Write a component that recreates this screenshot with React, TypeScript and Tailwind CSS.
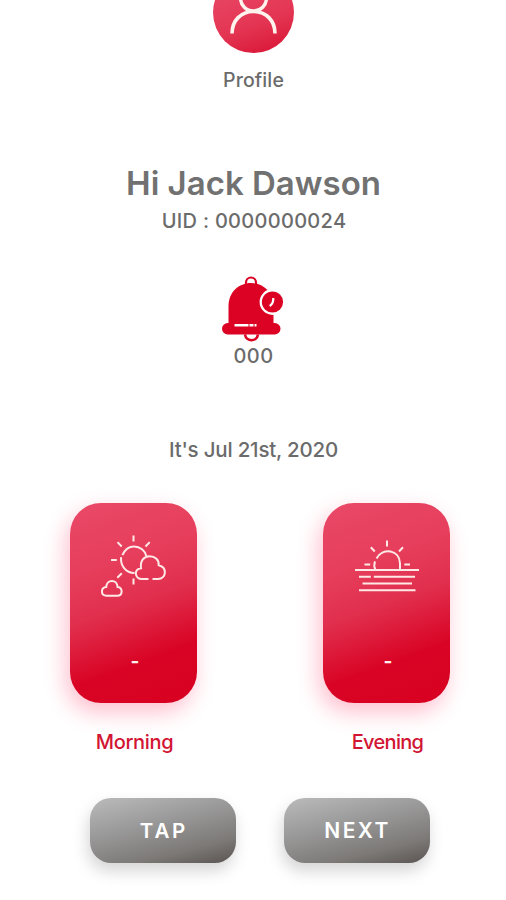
import React from "react";

function ProfileIcon() {
  return (
    <svg width="81" height="81" viewBox="0 0 81 81" fill="none" className="block">
      <defs>
        <linearGradient id="avatar" x1="0.3" y1="0" x2="0.65" y2="1">
          <stop offset="0" stopColor="#e94b69" />
          <stop offset="0.65" stopColor="#e33553" />
          <stop offset="1" stopColor="#db1939" />
        </linearGradient>
      </defs>
      <circle cx="40.5" cy="40.5" r="40.5" fill="url(#avatar)" />
      <circle cx="40.5" cy="26" r="13" stroke="#fff3ee" strokeWidth="3.4" />
      <path d="M19 61.5 C19 48.5 28 39.5 40.5 39.5 S62 48.5 62 61.5" stroke="#fff3ee" strokeWidth="3.6" />
    </svg>
  );
}

function BellIcon() {
  return (
    <svg width="62" height="66" viewBox="0 0 62 66" fill="none" className="block">
      <path d="M24 9 V6.5 a5 5 0 0 1 10 0 V9" stroke="#db0224" strokeWidth="2.2" />
      <path d="M6.500 50 V30 C6.500 16 17 7 29 7 S51.500 16 51.500 30 V50 Z" fill="#db0224" />
      <rect x="0" y="47" width="58.500" height="11.500" rx="5.750" fill="#db0224" />
      <path d="M23 58.500 C24 66 35 66 36 58.500" stroke="#db0224" strokeWidth="2.500" />
      <path d="M12.500 49.300 H26.500 M27.500 49.300 H31.500 M32.500 49.300 H34.500" stroke="#fff" strokeWidth="2.600" />
      <circle cx="50.500" cy="26" r="12.900" fill="#fff" />
      <circle cx="50.500" cy="26" r="10.600" fill="#db0224" />
      <path d="M51.300 22 C51.500 26 51 28 47.700 30" stroke="#fff" strokeWidth="2.200" />
    </svg>
  );
}

function MorningIcon() {
  return (
    <svg width="66" height="64" viewBox="0 0 66 64" fill="none" stroke="#ffe9e6" strokeWidth="2" className="block">
      <path d="M32.500 0.500 V6.500 M16.500 7.100 L20.700 11.500 M48.700 7.100 L44.500 11.500 M10 25 H15.800 M20.800 38.200 L16.300 42.700 M32.500 43.500 V49.500" />
      <path d="M21.400 20.200 C24 14.300 28 11.500 33 11.500 C39.300 11.500 44 15.700 45.300 21 M20.100 22.200 C19.200 30.500 24.500 38 33.500 38.100" />
      <path d="M47.500 44 H41 C33.500 44 32.500 34 40 33.200 C39 25.800 43 21.300 48.500 21.300 C54.200 21.300 58.200 25 57.700 30.300 C66.500 32.600 65.500 43.500 57 44 H51.500" />
      <path d="M5.500 60.700 C-0.500 60.700 -0.500 52.800 5.200 52.100 C5.600 43.800 16.200 43.800 16.600 52.100 C22 52.800 22 60.700 16.200 60.700 Z" />
    </svg>
  );
}

function EveningIcon() {
  return (
    <svg width="64" height="54" viewBox="0 0 64 54" fill="none" stroke="#ffe9e6" strokeWidth="2" className="block">
      <path d="M32 0.500 V6.500 M15.800 7.300 L19.800 11.500 M48 7.300 L44 11.500 M9.500 24.500 H15.200 M49.300 24.500 H55" />
      <path d="M20.500 30 C18.900 27 19.100 23.700 20 21.300 M21.500 18.500 C28 7 44.500 10 45 23.200 V30" />
      <path d="M0 30 H64 M4 36.800 H15.800 M18.800 36.800 H60 M7.500 43.500 H57 M4 50.300 H60.500" />
    </svg>
  );
}

type PeriodProps = { label: string; labelClass: string; children: React.ReactNode };

function PeriodCard({ label, labelClass, children }: PeriodProps) {
  return (
    <div className="flex w-[127px] flex-col items-center">
      <div className="flex h-[200px] w-full flex-col items-center rounded-[31px] bg-[linear-gradient(160deg,#e94967_0%,#e63e5c_30%,#e12f4e_50%,#d90425_75%,#d80020_100%)] shadow-[-4px_9px_22px_rgba(255,60,105,0.33)]">
        <div className="flex h-[127px] items-center justify-center">{children}</div>
        <span className="mt-[22px] pl-[3px] text-[19px] font-bold leading-[20px] text-[#fff1ed]">-</span>
      </div>
      <span className={`mt-[27px] whitespace-nowrap pl-[2px] font-medium leading-[24px] text-[#d21532] ${labelClass}`}>{label}</span>
    </div>
  );
}

function ActionButton({ children, className }: { children: string; className: string }) {
  return (
    <button className={`flex h-[65px] w-[146px] items-center justify-center rounded-[21px] bg-[linear-gradient(166deg,#bbbbbb_0%,#989797_42%,#7c7977_75%,#5a5451_100%)] font-semibold leading-[24px] text-white shadow-[-2px_8px_16px_rgba(0,0,0,0.17)] ${className}`}>
      {children}
    </button>
  );
}

export default function App() {
  return (
    <main className="flex h-[900px] w-[506px] flex-col items-center overflow-hidden bg-white font-['Inter',sans-serif] text-[#6b6b6b]">
      <section className="flex flex-col items-center">
        <div className="-mt-[28px] h-[81px]"><ProfileIcon /></div>
        <span className="mt-[15px] pl-px text-[19.5px] font-medium leading-[24px] tracking-[0.1px]">Profile</span>
      </section>
      <section className="mt-[71px] flex flex-col items-center whitespace-nowrap">
        <h1 className="pl-px text-[33px] font-semibold leading-[40px] text-[#717171]">Hi Jack Dawson</h1>
        <p className="mt-[6px] pl-[2px] text-[20px] font-medium leading-[24px] tracking-[0.3px]">UID : 0000000024</p>
      </section>
      <section className="mt-[43px] flex flex-col items-center">
        <BellIcon />
        <span className="mt-[2px] pl-px text-[20px] font-medium leading-[24px] tracking-[0.5px]">000</span>
      </section>
      <p className="mt-[70px] whitespace-nowrap pl-px text-[20.5px] font-medium leading-[24px] tracking-[-0.2px]">It's Jul 21st, 2020</p>
      <section className="mt-[41px] flex w-full gap-[126px] pl-[70px]">
        <PeriodCard label="Morning" labelClass="text-[20px] tracking-[-0.35px]"><MorningIcon /></PeriodCard>
        <PeriodCard label="Evening" labelClass="text-[20px] tracking-[-0.7px]"><EveningIcon /></PeriodCard>
      </section>
      <section className="mt-[44px] flex w-full gap-[48px] pl-[90px]">
        <ActionButton className="pl-[2px] pt-px text-[20.5px] tracking-[2.8px]">TAP</ActionButton>
        <ActionButton className="pl-px text-[21px] tracking-[2.4px]">NEXT</ActionButton>
      </section>
    </main>
  );
}
